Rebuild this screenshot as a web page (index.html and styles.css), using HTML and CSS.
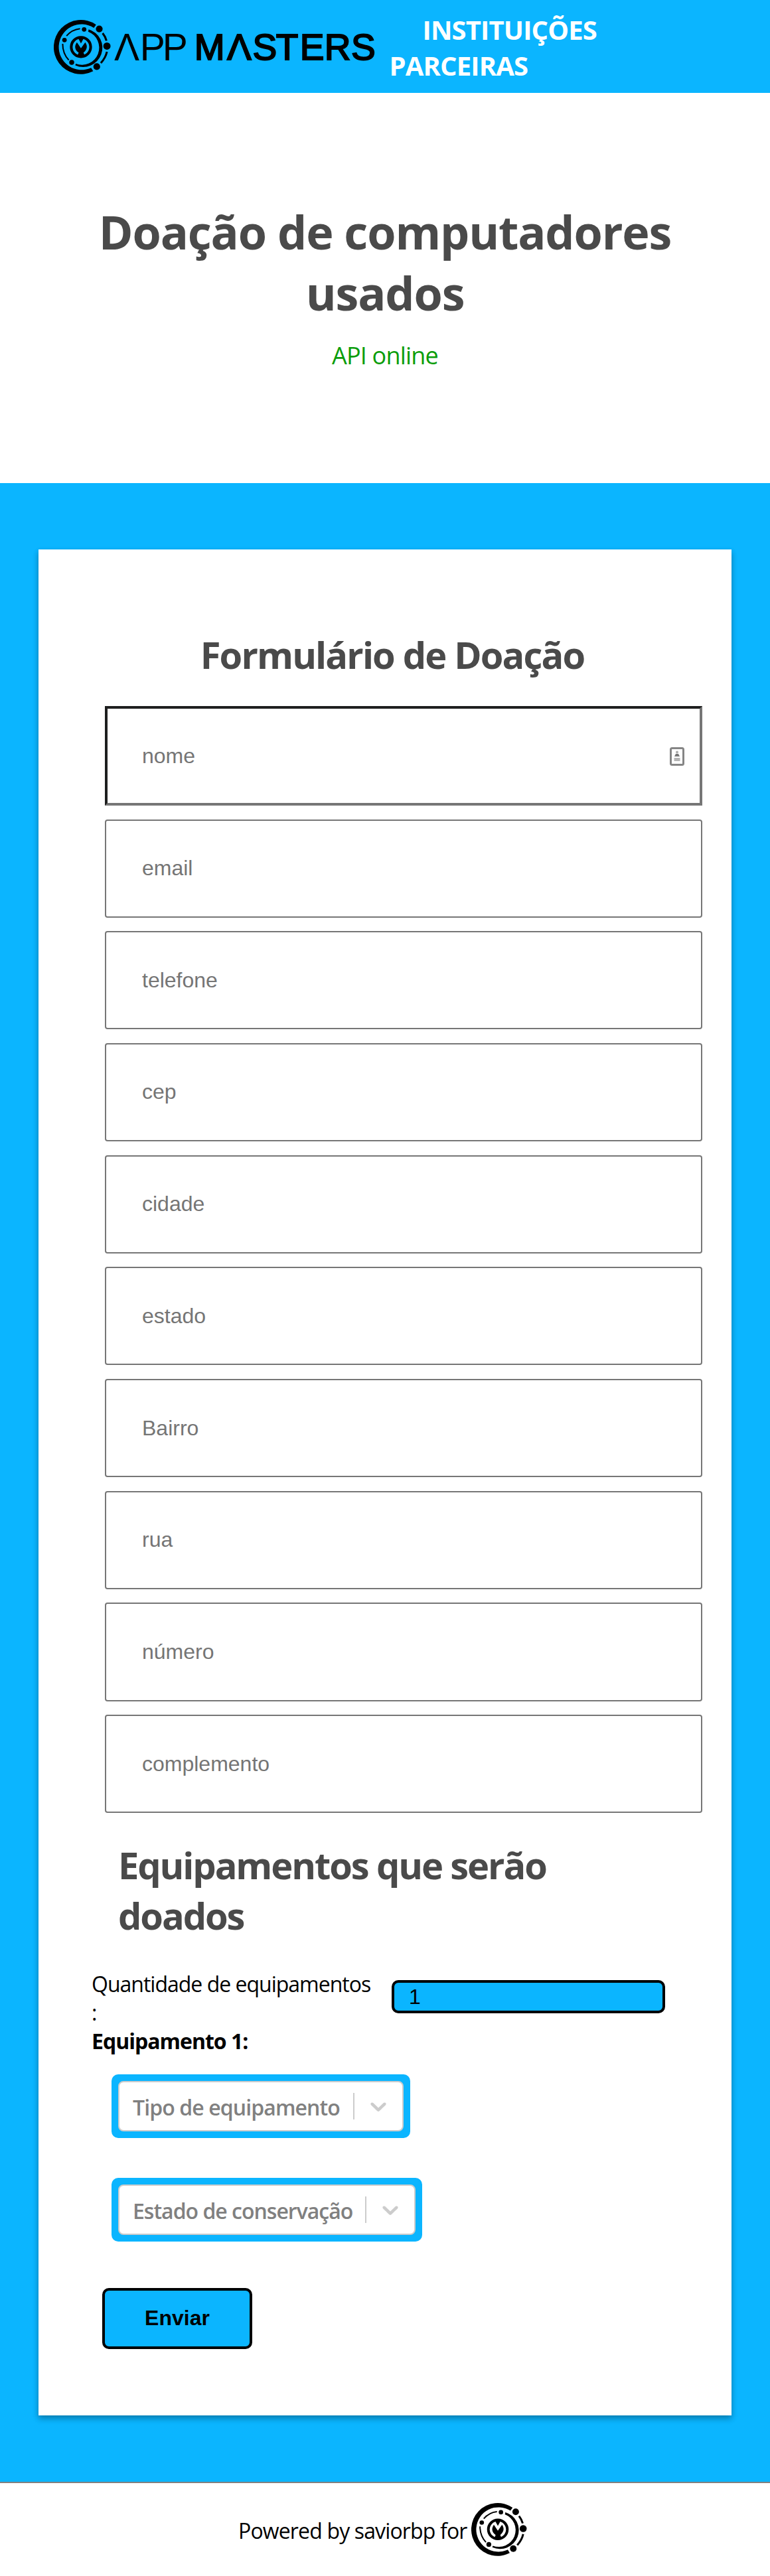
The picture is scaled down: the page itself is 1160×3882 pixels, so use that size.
FILE: index.html
```html
<!DOCTYPE html>
<html lang="pt-BR">
<head>
<meta charset="utf-8">
<title>Doação de computadores usados</title>
<link rel="stylesheet" href="styles.css">
</head>
<body>
<svg class="defs" aria-hidden="true">
  <symbol id="orbit" viewBox="0 0 252 241">
    <path d="M187 21A120 120 0 1 0 174 227L165 212A101 101 0 1 1 177 35Z"/>
    <circle cx="201" cy="40" r="15"/><circle cx="235" cy="116" r="16"/><circle cx="190" cy="207" r="15"/>
    <circle cx="134" cy="42" r="10"/><circle cx="47" cy="89" r="10"/><circle cx="79" cy="188" r="11"/>
    <path d="M154 42A85 85 0 1 1 95 201L97 194A72 72 0 1 0 152 52Z"/>
    <g fill="none" stroke="#000">
      <path stroke-width="9" d="M216 59Q228 74 233 92M235 141Q229 168 208 191"/>
      <path stroke-width="6" d="M56 71Q80 43 116 39M39 106Q39 150 66 178"/>
      <circle cx="120" cy="120" r="43" stroke-width="12"/>
    </g>
    <path d="M106 78H134L120 104ZM102 99L120 126L139 99C151 116 147 132 131 145L138 161H103L110 145C92 132 90 116 102 99Z"/>
  </symbol>
</svg>
<header class="header">
  <svg class="brand" viewBox="0 0 490 84" role="img" aria-label="App Masters">
    <use href="#orbit" x="0" y="0" width="86" height="82"/>
    <text class="thin" y="60.5" x="91 129.8 163.8">ΛPP</text>
    <text class="bold" y="60" x="211.8 261 299.5 334.7 370.8 407.8 448">MΛSTERS</text>
  </svg>
  <nav class="nav"><a>INSTITUIÇÕES PARCEIRAS</a></nav>
</header>
<section class="hero">
  <h1>Doação de computadores usados</h1>
  <p>API online</p>
</section>
<main class="main">
  <form class="card">
    <h2 class="title">Formulário de Doação</h2>
    <div class="fields">
      <div class="field first"><input placeholder="nome">
        <svg class="contact" viewBox="0 0 24 30"><rect x="2.5" y="2.5" width="19" height="25" rx="2" fill="none" stroke="#858585" stroke-width="3"/><circle cx="12" cy="8.5" r="2" fill="#aaa"/><path d="M8 15L10 11H14L16 15Z" fill="#777"/><path d="M7.500 17H16.500V22H7.500Z" fill="#b5b5b5"/></svg>
      </div>
      <div class="field"><input placeholder="email"></div>
      <div class="field"><input placeholder="telefone"></div>
      <div class="field"><input placeholder="cep"></div>
      <div class="field"><input placeholder="cidade"></div>
      <div class="field"><input placeholder="estado"></div>
      <div class="field"><input placeholder="Bairro"></div>
      <div class="field"><input placeholder="rua"></div>
      <div class="field"><input placeholder="número"></div>
      <div class="field"><input placeholder="complemento"></div>
    </div>
    <h2 class="subtitle">Equipamentos que serão doados</h2>
    <div class="quantity"><label for="qtd">Quantidade de equipamentos<br>:</label><input id="qtd" value="1"></div>
    <p class="item">Equipamento 1:</p>
    <div class="select type"><div class="control"><span>Tipo de equipamento</span><i></i><svg viewBox="0 0 20 20"><path d="M4.516 7.548c0.436-0.446 1.043-0.481 1.576 0l3.908 3.747 3.908-3.747c0.533-0.481 1.141-0.446 1.574 0 0.436 0.445 0.408 1.197 0 1.615-0.406 0.418-4.695 4.502-4.695 4.502-0.217 0.223-0.502 0.335-0.787 0.335s-0.570-0.112-0.789-0.335c0 0-4.287-4.084-4.695-4.502s-0.436-1.170 0-1.615z"/></svg></div></div>
    <div class="select state"><div class="control"><span>Estado de conservação</span><i></i><svg viewBox="0 0 20 20"><path d="M4.516 7.548c0.436-0.446 1.043-0.481 1.576 0l3.908 3.747 3.908-3.747c0.533-0.481 1.141-0.446 1.574 0 0.436 0.445 0.408 1.197 0 1.615-0.406 0.418-4.695 4.502-4.695 4.502-0.217 0.223-0.502 0.335-0.787 0.335s-0.570-0.112-0.789-0.335c0 0-4.287-4.084-4.695-4.502s-0.436-1.170 0-1.615z"/></svg></div></div>
    <button class="send" type="button">Enviar</button>
  </form>
</main>
<footer class="footer"><span>Powered by saviorbp for</span><svg class="mark" role="img" aria-label="App Masters"><use href="#orbit" width="84" height="80"/></svg></footer>
</body>
</html>
```
FILE: styles.css
```css
* { box-sizing: border-box; }
body { margin: 0; background: #fff; color: #000; font-family: "Open Sans", "Noto Sans", sans-serif; font-size: 32px; }
h1, h2, p { margin: 0; }
.defs { display: block; width: 0; height: 0; }
.header { display: flex; height: 140px; background: #0bb5ff; }
.brand { flex: none; width: 490px; height: 84px; margin: 30px 0 0 80.500px; }
.brand text { font-family: "Liberation Sans", Arial, sans-serif; font-size: 57px; }
.brand .bold { font-size: 55px; stroke: #000; stroke-width: 2px; }
.nav { width: 360px; margin: 18px 0 0 16px; color: #fff; font-size: 40px; font-weight: 700; line-height: 54px; text-indent: 50px; letter-spacing: -0.850px; }
.hero { height: 588px; padding-top: 163px; text-align: center; }
.hero h1 { width: 900px; margin: 0 auto; color: #4a4a4a; font-size: 70px; line-height: 92px; letter-spacing: -1.150px; }
.hero p { margin-top: 25px; color: #0a9d0a; font-size: 36px; line-height: 48px; letter-spacing: -0.800px; }
.main { height: 3012px; padding: 100px 58px 0; background: #0bb5ff; }
.card { height: 2812px; padding: 120px 0 0; background: #fff; box-shadow: 0 4px 8px rgba(0, 0, 0, .2), 0 5px 10px rgba(0, 0, 0, .15); }
.title { padding-left: 22px; color: #4a4a4a; font-size: 56px; line-height: 76px; text-align: center; letter-spacing: -1.850px; }
.fields { display: grid; grid-template-rows: 150px; grid-auto-rows: 148.200px; gap: 20.500px; width: 900px; margin: 40px 0 0 100px; }
.field { position: relative; }
.field input { display: block; width: 100%; height: 100%; border: 2px solid #767676; border-radius: 4px; padding: 0 54px; background: #fff; font-family: "Liberation Sans", Arial, sans-serif; font-size: 32px; }
.field.first input { border: 4px solid; border-color: #1e1f1f #767676 #767676 #1e1f1f; border-radius: 0; padding: 0 52px; }
.field input::placeholder { color: #757575; }
.contact { position: absolute; top: 61px; right: 26px; width: 24px; height: 30px; }
.subtitle { width: 700px; margin: 40px 0 0 120px; color: #4a4a4a; font-size: 56px; line-height: 76px; letter-spacing: -2.100px; }
.quantity { display: flex; align-items: center; height: 86px; margin: 43.500px 0 0 80px; line-height: 43px; }
.quantity label { width: 440px; white-space: nowrap; letter-spacing: -1px; }
.quantity input { width: 412px; height: 50px; margin: 0 0 3px 12px; padding: 0 22px; border: 4px solid #000; border-radius: 10px; background: #0bb5ff; font-family: "Liberation Sans", Arial, sans-serif; font-size: 32px; }
.item { margin-left: 80px; font-weight: 700; line-height: 43px; letter-spacing: -1px; }
.select { height: 96px; margin: 29px 0 0 110px; padding: 10px; border-radius: 10px; background: #0bb5ff; }
.type { width: 450px; }
.state { width: 468px; margin-top: 60px; }
.control { display: flex; align-items: center; height: 76px; padding-left: 20px; border: 2px solid #ccc; border-radius: 8px; background: #fff; }
.control span { flex: 1; padding-top: 3px; color: gray; font-weight: 600; white-space: nowrap; letter-spacing: -1px; }
.type span { letter-spacing: -0.900px; }
.control i { width: 2px; height: 40px; background: #ccc; }
.control svg { width: 40px; height: 40px; margin: 0 16px; fill: #ccc; }
.send { display: block; width: 226px; height: 92px; margin: 70px 0 0 96px; padding: 0; border: 4px solid #000; border-radius: 10px; background: #0bb5ff; color: #000; font: bold 32px "Liberation Sans", Arial, sans-serif; }
.footer { display: flex; height: 142px; padding: 30px 0 0 359px; border-top: 2px solid #808080; }
.footer span { width: 351px; line-height: 83px; white-space: nowrap; letter-spacing: -0.850px; }
.mark { width: 84px; height: 80px; }
```
